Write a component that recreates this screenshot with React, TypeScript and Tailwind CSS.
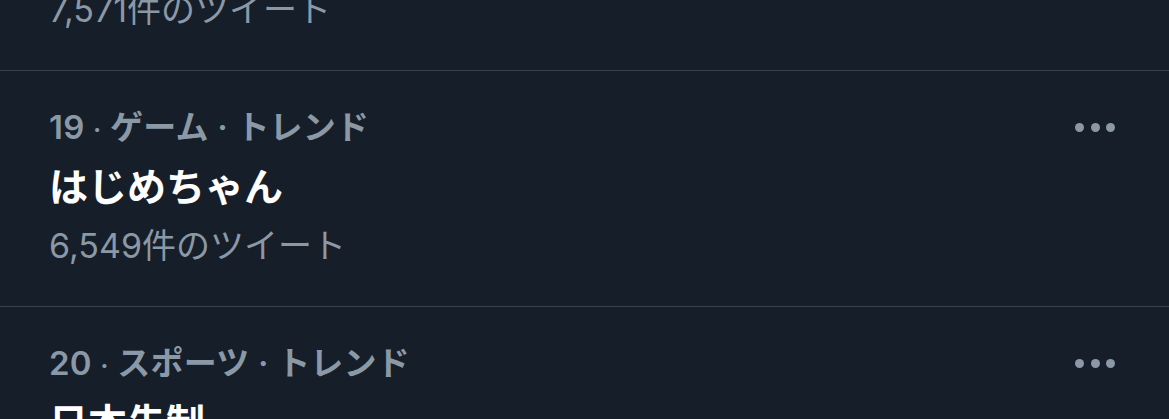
interface Trend {
  rank: number;
  category: string;
  title: string;
  tweets: string;
}

const trends: Trend[] = [
  { rank: 18, category: 'エンターテイメント', title: 'ぱちぴちら', tweets: '7,571件のツイート' },
  { rank: 19, category: 'ゲーム', title: 'はじめちゃん', tweets: '6,549件のツイート' },
  { rank: 20, category: 'スポーツ', title: '日本先制', tweets: '5,102件のツイート' },
];

function TrendRow({ trend }: { trend: Trend }) {
  return (
    <div className="flex justify-between border-b border-[#38414c] pl-[49px] pr-[54px] pt-[27px] pb-[31px]">
      <div className="flex flex-col">
        <div className="h-[59px] leading-[59px] text-[33px] font-semibold text-[#8b98a5] tracking-[0.2px]">
          {trend.rank} <span className="text-[26px]">·</span> {trend.category} · トレンド
        </div>
        <div className="h-[59px] leading-[59px] text-[39px] font-bold text-white">{trend.title}</div>
        <div className="h-[59px] leading-[59px] text-[34px] text-[#8b98a5]">{trend.tweets}</div>
      </div>
      <div className="flex h-[59px] items-center gap-[6.5px]">
        <span className="h-[9px] w-[9px] rounded-full bg-[#8b98a5]" />
        <span className="h-[9px] w-[9px] rounded-full bg-[#8b98a5]" />
        <span className="h-[9px] w-[9px] rounded-full bg-[#8b98a5]" />
      </div>
    </div>
  );
}

export default function App() {
  return (
    <div
      className="h-[419px] w-full overflow-hidden bg-[#161e29]"
      style={{ fontFamily: 'Inter, "Noto Sans CJK JP", sans-serif' }}
    >
      {/* list is scrolled: first row only shows its last line */}
      <div className="-mt-[165px]">
        {trends.map((t) => (
          <TrendRow key={t.rank} trend={t} />
        ))}
      </div>
    </div>
  );
}
